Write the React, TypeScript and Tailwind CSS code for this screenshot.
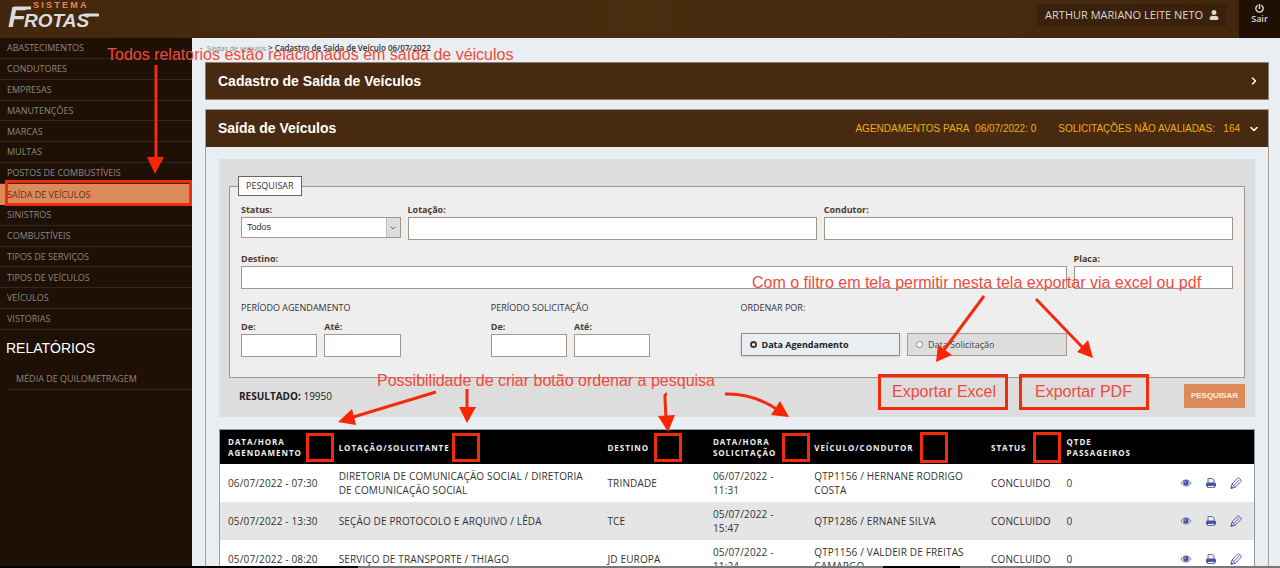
import React from "react";
import { FaUser, FaPowerOff } from "react-icons/fa";
import { ChevronRight, ChevronDown } from "lucide-react";

const menu = [
  "ABASTECIMENTOS",
  "CONDUTORES",
  "EMPRESAS",
  "MANUTENÇÕES",
  "MARCAS",
  "MULTAS",
  "POSTOS DE COMBUSTÍVEIS",
  "SAÍDA DE VEÍCULOS",
  "SINISTROS",
  "COMBUSTÍVEIS",
  "TIPOS DE SERVIÇOS",
  "TIPOS DE VEÍCULOS",
  "VEÍCULOS",
  "VISTORIAS",
];

const rows = [
  ["06/07/2022 - 07:30", "DIRETORIA DE COMUNICAÇÃO SOCIAL / DIRETORIA DE COMUNICAÇÃO SOCIAL", "TRINDADE", "06/07/2022 - 11:31", "QTP1156 / HERNANE RODRIGO COSTA", "CONCLUIDO", "0"],
  ["05/07/2022 - 13:30", "SEÇÃO DE PROTOCOLO E ARQUIVO / LÊDA", "TCE", "05/07/2022 - 15:47", "QTP1286 / ERNANE SILVA", "CONCLUIDO", "0"],
  ["05/07/2022 - 08:20", "SERVIÇO DE TRANSPORTE / THIAGO", "JD EUROPA", "05/07/2022 - 11:24", "QTP1156 / VALDEIR DE FREITAS CAMARGO", "CONCLUIDO", "0"],
];

const cellPadding = ["pl-2", "pr-3 pl-2", "pl-2", "pr-5 pl-2", "pr-3 pl-2", "pl-2", "pl-2"];

const heads = ["DATA/HORA AGENDAMENTO", "LOTAÇÃO/SOLICITANTE", "DESTINO", "DATA/HORA SOLICITAÇÃO", "VEÍCULO/CONDUTOR", "STATUS", "QTDE PASSAGEIROS"];

function Field({ id, label, className }: { id: string; label: string; className: string }) {
  return (
    <div className={className}>
      <label htmlFor={id} className="block text-[9px] leading-[14px] font-bold text-[#4c3b2c]">
        {label}
      </label>
      <input id={id} type="text" className="block h-[23px] w-full border border-[#a3968a] bg-white px-1 text-[9px] outline-none" />
    </div>
  );
}

function Logo() {
  return (
    <a href="#inicio" aria-label="Sistema Frotas" className="relative ml-2 block h-[38px] w-24 shrink-0 font-['Liberation_Sans',sans-serif]">
      <span className="absolute top-0 left-[25px] text-[9px] leading-[10px] font-bold tracking-[0.25em] text-[#e8854f]">SISTEMA</span>
      <span className="absolute top-[4px] left-0 text-[29px] leading-[26px] font-bold text-[#dcdcdc] italic">F</span>
      <span className="absolute top-[11px] left-4 text-[19px] leading-[20px] font-bold text-[#dcdcdc] italic">ROTAS</span>
      <svg className="absolute inset-0" width="96" height="38" viewBox="0 0 96 38" fill="none" stroke="#dcdcdc" aria-hidden="true">
        <path d="M6 8H23" strokeWidth="3" />
        <path d="M76 15H91" strokeWidth="3" />
      </svg>
    </a>
  );
}

function EyeIcon() {
  return (
    <svg width="12" height="12" viewBox="0 0 12 12" aria-hidden="true">
      <path d="M.8 6Q3 2.800 6 2.800T11.200 6Q9 9.200 6 9.200T.8 6z" fill="#e3e6f4" stroke="#6a75b4" strokeWidth=".9" />
      <circle cx="6" cy="5.800" r="2.700" fill="#47539c" />
      <circle cx="5.200" cy="5" r=".8" fill="#c9cee8" />
    </svg>
  );
}

function PrintIcon() {
  return (
    <svg width="12" height="12" viewBox="0 0 12 12" aria-hidden="true">
      <path d="M3 6V1.500h4.500L9 3v3" fill="#f1f2fa" stroke="#5f6aae" />
      <path d="M1 7q0-1.500 1.500-1.500h7Q11 5.500 11 7v2.500H1z" fill="#47539c" />
      <path d="M2.500 8.500h7v2h-7z" fill="#e8eaf6" stroke="#47539c" strokeWidth=".8" />
    </svg>
  );
}

function PencilIcon() {
  return (
    <svg width="12" height="12" viewBox="0 0 12 12" fill="none" stroke="#5661a8" strokeWidth="1" aria-hidden="true">
      <path d="M1 11.300l1-4.300L7.500 1.200q.8-.6 1.500 0l1.900 1.700q.7.800 0 1.600L5.400 10.200z" />
      <path d="M2 7l3.400 3.200M3.700 8.600L9.300 2.900" />
      <path d="M1 11.300l.5-2 1.500 1.400z" fill="#5661a8" />
    </svg>
  );
}

function Note({ className, children }: { className: string; children: React.ReactNode }) {
  return (
    <p className={"absolute font-['Liberation_Sans',sans-serif] text-[16px] leading-5 whitespace-nowrap text-[#f14a3c] " + className}>{children}</p>
  );
}

function Annotations() {
  return (
    <div className="pointer-events-none absolute inset-0">
      <svg className="absolute top-0 left-0" width="1280" height="568" viewBox="0 0 1280 568" fill="none" stroke="#f22c0b" strokeWidth="3" aria-hidden="true">
        <path d="M156 65V160M436 392L350 418M467 389V410M667 394q-2.500 0-2 4l1 22M725 394q28-1 53 16M984 296L944 350M1036 299L1085 350" />
        <g fill="#fb2503" stroke="none">
          <path d="M147 157h17l-9 17zM338 422l14-13 4 16zM459 407h17l-9 16zM658 416l17-1-7 17zM789 417l-18-2 9-14zM936 362l2-17 14 10zM1093 358l-16-6 11-12z" />
        </g>
        <g strokeWidth="3">
          <rect x="6.500" y="181.500" width="184" height="23" />
          <rect x="307.500" y="434.500" width="25" height="26" />
          <rect x="453.500" y="434.500" width="25" height="26" />
          <rect x="655.500" y="434.500" width="25" height="26" />
          <rect x="783.500" y="434.500" width="25" height="26" />
          <rect x="921.500" y="433.500" width="25" height="28" />
          <rect x="1034.500" y="433.500" width="25" height="28" />
          <rect x="879.500" y="375.500" width="127" height="33" />
          <rect x="1020.500" y="375.500" width="127" height="33" />
        </g>
      </svg>
      <Note className="top-[45px] left-[107px]">Todos relatorios estão relacionados em saída de véiculos</Note>
      <Note className="top-[273px] left-[752px]">Com o filtro em tela permitir nesta tela exportar via excel ou pdf</Note>
      <Note className="top-[371px] left-[377px]">Possibilidade de criar botão ordenar a pesquisa</Note>
      <Note className="top-[382px] left-[892px]">Exportar Excel</Note>
      <Note className="top-[382px] left-[1035px]">Exportar PDF</Note>
    </div>
  );
}

export default function App() {
  return (
    <div className="relative flex h-screen flex-col overflow-hidden bg-[#e8eef1] font-['Open_Sans','Noto_Sans',sans-serif] text-[#333]">
      <header className="flex h-[38px] shrink-0 items-start bg-linear-to-r from-[#43270d] via-[#4a2c0f] to-[#43270d]">
        <Logo />
        <button type="button" className="mt-1 ml-auto flex h-[22px] items-center gap-[6px] bg-[#3a210b] px-2 text-[11px] text-[#ddd8d2]">
          ARTHUR MARIANO LEITE NETO
          <FaUser size={10} />
        </button>
        <button type="button" className="ml-3 flex h-[38px] w-[41px] flex-col items-center bg-[#1f1003] pt-1 text-[9px] leading-3 font-semibold text-[#ddd8d2]">
          <FaPowerOff size={9} />
          Sair
        </button>
      </header>

      <div className="flex min-h-0 flex-1">
        <nav className="w-48 shrink-0 bg-[#1e1004] text-[9px] text-[#8d8780]">
          <ul className="grid h-[292px] auto-rows-fr">
            {menu.map((m) => (
              <li key={m} className={m === "SAÍDA DE VEÍCULOS" ? "bg-[#dd8a5b] text-[#5c3218]" : "border-b border-[#33261b]"}>
                <a href="#menu" className="flex h-full items-center px-[7px]">
                  {m}
                </a>
              </li>
            ))}
          </ul>
          <h2 className="mt-2 px-[6px] font-['Liberation_Sans',sans-serif] text-[14px] leading-5 text-white">RELATÓRIOS</h2>
          <a href="#media" className="mt-2 ml-2 flex h-6 items-center border-b border-[#33261b] px-2 pt-[3px]">
            MÉDIA DE QUILOMETRAGEM
          </a>
        </nav>

        <main className="min-w-0 flex-1 pr-[11px] pl-[13px]">
          <p className="h-4 pt-1 pl-[2px] text-[8px] leading-3 font-semibold text-[#333]">
            <a href="#saidas" className="text-[7px] font-normal text-[#888]">
              Saídas de veículos
            </a>{" "}
            &gt; Cadastro de Saída de Veículo 06/07/2022
          </p>

          <section className="mt-2 flex h-[38px] items-center border border-[#8d8078] bg-[#472a10] pr-2 pl-3 text-white">
            <h1 className="flex-1 font-['Liberation_Sans',sans-serif] text-[14px] font-bold">Cadastro de Saída de Veículos</h1>
            <button type="button" aria-label="Expandir">
              <ChevronRight size={12} strokeWidth={3} />
            </button>
          </section>

          <section className="mt-[9px] border border-[#a49d98] pb-10">
            <div className="flex h-[37px] items-center bg-[#472a10] pr-2 pl-3 text-white">
              <h2 className="flex-1 font-['Liberation_Sans',sans-serif] text-[14px] font-bold">Saída de Veículos</h2>
              <p className="flex gap-[22px] font-['Liberation_Sans',sans-serif] text-[10px] text-[#f0ab13]">
                <span>AGENDAMENTOS PARA&nbsp; 06/07/2022: 0</span>
                <span>SOLICITAÇÕES NÃO AVALIADAS: &nbsp; 164</span>
              </p>
              <button type="button" aria-label="Recolher" className="ml-2">
                <ChevronDown size={12} strokeWidth={3} />
              </button>
            </div>

            <form className="mx-[13px] mt-3 bg-[#ddd] px-[10px] pt-[17px] pb-[9px]" onSubmit={(e) => e.preventDefault()}>
              <fieldset className="border border-[#a3968a] bg-[#eee] px-[11px] pb-[20px]">
                <legend className="-ml-[3px] h-5 border border-[#666] bg-white px-[7px] text-[9px] leading-[18px]">PESQUISAR</legend>
                <div className="grid grid-cols-12 gap-x-[7px] pt-[7px]">
                  <div className="col-span-2">
                    <label htmlFor="status" className="block text-[9px] leading-[14px] font-bold text-[#4c3b2c]">
                      Status:
                    </label>
                    <div className="relative">
                      <select id="status" className="block h-[21px] w-full appearance-none border border-[#a3968a] bg-white px-[5px] font-['Liberation_Sans',sans-serif] text-[9px] outline-none">
                        <option>Todos</option>
                      </select>
                      <span className="pointer-events-none absolute inset-y-px right-px flex w-[14px] items-center justify-center border-l border-[#bbb] bg-[#ddd]">
                        <ChevronDown size={8} />
                      </span>
                    </div>
                  </div>
                  <Field id="lotacao" label="Lotação:" className="col-span-5" />
                  <Field id="condutor" label="Condutor:" className="col-span-5" />
                  <Field id="destino" label="Destino:" className="col-span-10 mt-3" />
                  <Field id="placa" label="Placa:" className="col-span-2 mt-3" />
                </div>
                <div className="mt-3 grid grid-cols-12 gap-x-[7px]">
                  <p className="col-span-3 text-[9px] leading-[14px]">PERÍODO AGENDAMENTO</p>
                  <p className="col-span-3 text-[9px] leading-[14px]">PERÍODO SOLICITAÇÃO</p>
                  <p className="col-span-6 text-[9px] leading-[14px]">ORDENAR POR:</p>
                  <Field id="ag-de" label="De:" className="mt-[5px]" />
                  <Field id="ag-ate" label="Até:" className="mt-[5px]" />
                  <Field id="so-de" label="De:" className="col-start-4 mt-[5px]" />
                  <Field id="so-ate" label="Até:" className="mt-[5px]" />
                  <label className="col-span-2 col-start-7 mb-px flex h-[23px] items-center gap-[5px] self-end border border-[#8f8a86] bg-[#e8eef1] px-2 text-[9px] font-bold text-[#222] shadow-sm">
                    <input type="radio" name="ordem" defaultChecked className="size-[7px] appearance-none rounded-full border-2 border-[#4a3520] bg-white" />
                    Data Agendamento
                  </label>
                  <label className="col-span-2 mb-px flex h-[23px] items-center gap-[5px] self-end border border-[#a39c96] bg-[#ddd] px-2 text-[9px] text-[#444]">
                    <input type="radio" name="ordem" className="size-[7px] appearance-none rounded-full border border-[#888] bg-white" />
                    Data Solicitação
                  </label>
                </div>
              </fieldset>
              <div className="mt-[6px] flex items-center justify-between">
                <p className="pl-[10px] text-[10px] text-[#222]">
                  <b>RESULTADO:</b> 19950
                </p>
                <button type="submit" className="h-6 bg-[#dd8a5b] px-[7px] font-['Liberation_Sans',sans-serif] text-[8px] font-bold text-[#fbeee4]">
                  PESQUISAR
                </button>
              </div>
            </form>

            <div className="mx-[13px] mt-3 border border-[#999] bg-white">
              <table className="w-full table-fixed border-collapse text-left text-[10px] leading-[14px]">
                <colgroup>
                  <col className="w-[10.7%]" />
                  <col className="w-[26%]" />
                  <col className="w-[10.2%]" />
                  <col className="w-[9.8%]" />
                  <col className="w-[17.1%]" />
                  <col className="w-[7.3%]" />
                  <col className="w-[8%]" />
                  <col />
                </colgroup>
                <thead className="bg-black text-[8px] leading-[11px] tracking-[0.12em] text-[#eee]">
                  <tr className="h-[34px]">
                    {heads.map((h) => (
                      <th key={h} className="pl-2 font-bold">
                        {h}
                      </th>
                    ))}
                    <th aria-label="Ações" />
                  </tr>
                </thead>
                <tbody>
                  {rows.map((r) => (
                    <tr key={r[0]} className="h-[38px] even:bg-[#e5e5e5]">
                      {r.map((c, i) => (
                        <td key={i} className={cellPadding[i] + " tracking-[0.015em]"}>
                          {c}
                        </td>
                      ))}
                      <td className="pr-[12px]">
                        <div className="flex justify-end gap-[13px]">
                          <button type="button" aria-label="Visualizar">
                            <EyeIcon />
                          </button>
                          <button type="button" aria-label="Imprimir">
                            <PrintIcon />
                          </button>
                          <button type="button" aria-label="Editar">
                            <PencilIcon />
                          </button>
                        </div>
                      </td>
                    </tr>
                  ))}
                </tbody>
              </table>
            </div>
          </section>
        </main>
      </div>

      <div className="absolute inset-x-0 bottom-0 flex h-[2px] bg-[#777]">
        <span className="w-[28%] bg-black" />
        <span className="ml-[41%] w-[6%] bg-black" />
      </div>
      <Annotations />
    </div>
  );
}
